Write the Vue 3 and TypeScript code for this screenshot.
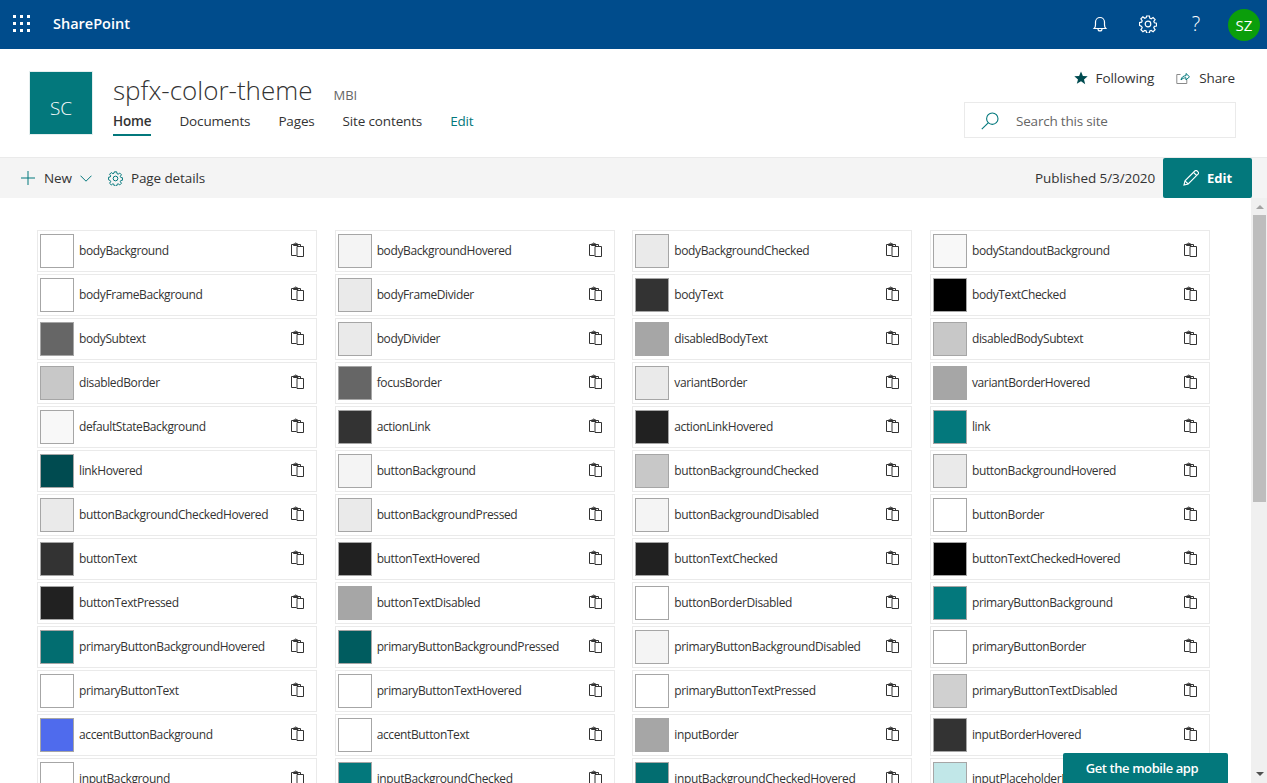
<template>
  <div class="page">
    <header class="suite">
      <div class="waffle">
        <i v-for="n in 9" :key="n"></i>
      </div>
      <span class="brand">SharePoint</span>
      <div class="suite-right">
        <svg class="suite-icon" viewBox="0 0 16 18" width="16" height="18" fill="none" stroke="#fff" stroke-width="1.2">
          <path d="M2.2 13.5c1-1 1.3-2 1.3-3.8V7a4.5 4.5 0 0 1 9 0v2.7c0 1.8.3 2.8 1.3 3.8z" />
          <path d="M6 14c0 2.6 4 2.6 4 0" />
        </svg>
        <svg class="suite-icon" viewBox="0 0 18 18" width="18" height="18" fill="none" stroke="#fff" stroke-width="1.2">
          <circle cx="9" cy="9" r="2.8" />
          <path d="M7.6 1h2.8l.4 2.2 1.4.6 1.9-1.3 2 2-1.3 1.9.6 1.4 2.1.4v2.8l-2.1.4-.6 1.4 1.3 1.9-2 2-1.9-1.3-1.4.6-.4 2.1H7.6l-.4-2.1-1.4-.6-1.9 1.3-2-2 1.3-1.9-.6-1.4L.5 10.4V7.6l2.1-.4.6-1.4-1.3-1.9 2-2 1.9 1.3 1.4-.6z" />
        </svg>
        <span class="help">?</span>
        <span class="avatar">SZ</span>
      </div>
    </header>

    <section class="site-head">
      <div class="logo">SC</div>
      <div class="site-info">
        <div class="title-row">
          <h1>spfx-color-theme</h1>
          <span class="mbi">MBI</span>
        </div>
        <nav class="site-nav">
          <a class="active">Home</a>
          <a>Documents</a>
          <a>Pages</a>
          <a>Site contents</a>
          <a class="nav-edit">Edit</a>
        </nav>
      </div>
      <div class="site-actions">
        <div class="follow-row">
          <span class="action">
            <svg viewBox="0 0 14 14" width="14" height="14"><path fill="#004b50" d="M7 .4l1.9 4.5 4.8.4-3.7 3.1 1.2 4.8L7 10.2l-4.2 2.5L4 8.4.3 5.3l4.800-.4z" /></svg>
            Following
          </span>
          <span class="action share">
            <svg viewBox="0 0 14 14" width="14" height="14" fill="none" stroke="#8a8a8a" stroke-width="1">
              <path d="M4.5 3.5H.8v9h10V9" />
              <path d="M5 9c.4-2.8 2.400-4.300 5-4.300V2.500l3.500 3.300L10 9V6.800C8 6.800 6.300 7.500 5 9z" stroke="#03787c" />
            </svg>
            Share
          </span>
        </div>
        <div class="search">
          <svg viewBox="0 0 18 18" width="18" height="18" fill="none" stroke="#03787c" stroke-width="1.1">
            <circle cx="11.3" cy="6.7" r="5.7" />
            <path d="M7.2 10.8L.8 17.2" />
          </svg>
          <span>Search this site</span>
        </div>
      </div>
    </section>

    <div class="command-bar">
      <svg viewBox="0 0 14 14" width="14" height="14" stroke="#03787c" stroke-width="1" fill="none"><path d="M7 0v14M0 7h14" /></svg>
      <span class="cmd-new">New</span>
      <svg class="chev" viewBox="0 0 12 7" width="12" height="7" fill="none" stroke="#03787c" stroke-width="1"><path d="M.5.7L6 6.2 11.500.7" /></svg>
      <svg class="cmd-gear" viewBox="0 0 18 18" width="15" height="15" fill="none" stroke="#03787c" stroke-width="1.2">
        <circle cx="9" cy="9" r="2.8" />
        <path d="M7.6 1h2.8l.4 2.2 1.4.6 1.9-1.3 2 2-1.3 1.9.6 1.4 2.1.4v2.8l-2.1.4-.6 1.4 1.3 1.9-2 2-1.9-1.3-1.4.6-.4 2.1H7.6l-.4-2.1-1.4-.6-1.9 1.3-2-2 1.3-1.9-.6-1.4L.5 10.4V7.6l2.1-.4.6-1.4-1.3-1.9 2-2 1.9 1.3 1.4-.6z" />
      </svg>
      <span>Page details</span>
      <span class="published">Published 5/3/2020</span>
      <button class="edit-btn">
        <svg viewBox="0 0 16 16" width="16" height="16" fill="none" stroke="#fff" stroke-width="1.1">
          <path d="M1 15l1-4.2L11.800 1a1.700 1.700 0 0 1 2.400 0l.8.8a1.700 1.700 0 0 1 0 2.400L5.200 14z" />
          <path d="M2 10.800L5.200 14M10.500 2.300l3.200 3.200" />
        </svg>
        Edit
      </button>
    </div>

    <div class="scroll-area">
      <main class="content">
        <div class="grid">
          <div v-for="item in slots" :key="item.name" class="card">
            <span class="swatch" :style="{ background: item.color }"></span>
            <span class="name">{{ item.name }}</span>
            <svg class="copy" viewBox="0 0 13 15" width="13" height="15" fill="none" stroke="#333333" stroke-width="1">
              <path d="M5.5 13.5H.5V2.500h9V4.500" />
              <path d="M2.500 3.500V2H4C4 .5 5.500 .5 5.500 2H7v1.500z" />
              <path d="M6 4.500h6.500v10H6z" />
            </svg>
          </div>
        </div>
      </main>
      <div class="scrollbar">
        <div class="arrow up"></div>
        <div class="thumb"></div>
        <div class="arrow down"></div>
      </div>
      <button class="mobile">Get the mobile app</button>
    </div>
  </div>
</template>

<script setup lang="ts">
interface Slot {
  name: string
  color: string
}

const teal = '#03787c'

const slots: Slot[] = [
  { name: 'bodyBackground', color: '#ffffff' },
  { name: 'bodyBackgroundHovered', color: '#f4f4f4' },
  { name: 'bodyBackgroundChecked', color: '#eaeaea' },
  { name: 'bodyStandoutBackground', color: '#f8f8f8' },
  { name: 'bodyFrameBackground', color: '#ffffff' },
  { name: 'bodyFrameDivider', color: '#eaeaea' },
  { name: 'bodyText', color: '#333333' },
  { name: 'bodyTextChecked', color: '#000000' },
  { name: 'bodySubtext', color: '#666666' },
  { name: 'bodyDivider', color: '#eaeaea' },
  { name: 'disabledBodyText', color: '#a6a6a6' },
  { name: 'disabledBodySubtext', color: '#c8c8c8' },
  { name: 'disabledBorder', color: '#c8c8c8' },
  { name: 'focusBorder', color: '#666666' },
  { name: 'variantBorder', color: '#eaeaea' },
  { name: 'variantBorderHovered', color: '#a6a6a6' },
  { name: 'defaultStateBackground', color: '#f8f8f8' },
  { name: 'actionLink', color: '#333333' },
  { name: 'actionLinkHovered', color: '#212121' },
  { name: 'link', color: teal },
  { name: 'linkHovered', color: '#004b50' },
  { name: 'buttonBackground', color: '#f4f4f4' },
  { name: 'buttonBackgroundChecked', color: '#c8c8c8' },
  { name: 'buttonBackgroundHovered', color: '#eaeaea' },
  { name: 'buttonBackgroundCheckedHovered', color: '#eaeaea' },
  { name: 'buttonBackgroundPressed', color: '#eaeaea' },
  { name: 'buttonBackgroundDisabled', color: '#f4f4f4' },
  { name: 'buttonBorder', color: '#ffffff' },
  { name: 'buttonText', color: '#333333' },
  { name: 'buttonTextHovered', color: '#212121' },
  { name: 'buttonTextChecked', color: '#212121' },
  { name: 'buttonTextCheckedHovered', color: '#000000' },
  { name: 'buttonTextPressed', color: '#212121' },
  { name: 'buttonTextDisabled', color: '#a6a6a6' },
  { name: 'buttonBorderDisabled', color: '#ffffff' },
  { name: 'primaryButtonBackground', color: teal },
  { name: 'primaryButtonBackgroundHovered', color: '#026d70' },
  { name: 'primaryButtonBackgroundPressed', color: '#005c5f' },
  { name: 'primaryButtonBackgroundDisabled', color: '#f4f4f4' },
  { name: 'primaryButtonBorder', color: '#ffffff' },
  { name: 'primaryButtonText', color: '#ffffff' },
  { name: 'primaryButtonTextHovered', color: '#ffffff' },
  { name: 'primaryButtonTextPressed', color: '#ffffff' },
  { name: 'primaryButtonTextDisabled', color: '#d0d0d0' },
  { name: 'accentButtonBackground', color: '#4f6bed' },
  { name: 'accentButtonText', color: '#ffffff' },
  { name: 'inputBorder', color: '#a6a6a6' },
  { name: 'inputBorderHovered', color: '#333333' },
  { name: 'inputBackground', color: '#ffffff' },
  { name: 'inputBackgroundChecked', color: teal },
  { name: 'inputBackgroundCheckedHovered', color: '#026d70' },
  { name: 'inputPlaceholderBackgroundChecked', color: '#c1e7e8' },
]
</script>

<style>
html, body { margin: 0; height: 100%; overflow: hidden; background: #fff; }
</style>

<style scoped>
.page {
  display: flex; flex-direction: column;
  height: 783px; overflow: hidden;
  font-family: 'Open Sans', 'Noto Sans', sans-serif;
  color: #333333;
  font-size: 13px;
}
.suite {
  display: flex; align-items: center;
  height: 49px; flex: none;
  background: #004c8c; color: #fff;
  padding-left: 13px;
}
.waffle {
  display: grid; grid-template-columns: repeat(3, 3px); gap: 4px;
  width: 17px; margin-bottom: 2px;
}
.waffle i { width: 3px; height: 3px; background: #fff; }
.brand { margin-left: 23px; margin-bottom: 2px; font-size: 14.5px; font-weight: 600; }
.suite-right { margin-left: auto; display: flex; align-items: center; padding-right: 7px; }
.suite-icon { display: block; margin-bottom: 2px; }
.suite-right .suite-icon:first-child { margin-right: 31px; }
.suite-right .suite-icon:nth-child(2) { margin-right: 31px; }
.help { font-size: 20px; font-weight: 300; width: 16px; text-align: center; margin-bottom: 2px; }
.avatar {
  display: flex; align-items: center; justify-content: center;
  width: 32px; height: 32px; margin-left: 24px;
  background: #0b9e0b; border-radius: 50%;
  font-size: 15px;
}

.site-head {
  display: flex; flex: none;
  height: 108px; box-sizing: border-box;
  padding: 22px 31px 0 29px;
}
.logo {
  display: flex; justify-content: center; align-items: center;
  width: 64px; height: 64px; box-sizing: border-box;
  padding-top: 10px;
  background: #03787c; border: 1px solid #e3eeee;
  color: #fff; font-size: 19px; font-weight: 300;
}
.site-info { margin-left: 20px; padding-top: 1px; }
.title-row { display: flex; align-items: baseline; height: 36px; }
h1 { margin: 0; font-size: 26px; font-weight: 300; line-height: 36px; color: #333333; }
.mbi { margin-left: 21px; font-size: 13px; color: #666666; }
.site-nav { display: flex; gap: 28px; }
.site-nav a {
  display: block; height: 28px; line-height: 26px;
  box-sizing: border-box; font-size: 13.5px; letter-spacing: -0.15px;
}
.site-nav .active { font-weight: 600; border-bottom: 2px solid #03787c; }
.site-nav .nav-edit { color: #03787c; }
.site-actions { margin-left: auto; margin-top: -1px; display: flex; flex-direction: column; align-items: flex-end; gap: 16px; }
.follow-row {
  display: flex; gap: 22px; height: 16px; align-items: center;
  padding-right: 1px;
  font-size: 13.5px; letter-spacing: -0.1px;
}
.action { display: flex; align-items: center; gap: 8px; }
.share { gap: 9px; }
.search {
  display: flex; align-items: center; gap: 17px;
  width: 272px; height: 36px; box-sizing: border-box;
  padding: 1px 0 0 16px;
  border: 1px solid #eaeaea;
  color: #666666; font-size: 13.5px; letter-spacing: -0.2px;
}

.command-bar {
  display: flex; align-items: center; flex: none;
  height: 41px; box-sizing: border-box;
  padding: 0 15px 0 21px;
  background: #f4f4f4; border-top: 1px solid #eaeaea;
  font-size: 13.5px; letter-spacing: -0.1px;
}
.cmd-new { margin-left: 9px; }
.chev { margin-left: 8px; }
.cmd-gear { margin: 0 8px 0 16px; }
.published { margin-left: auto; margin-right: 8px; }
.edit-btn {
  display: flex; align-items: center; justify-content: center; gap: 8px;
  width: 89px; height: 40px; padding: 0;
  background: #03787c; color: #fff;
  border: 0; border-radius: 2px;
  font-family: inherit; font-size: 13px; font-weight: 700;
}

.scroll-area { position: relative; display: flex; flex: 1; min-height: 0; overflow: hidden; }
.content { flex: 1; min-width: 0; padding: 32px 0 0 37px; }
.grid { display: grid; grid-template-columns: repeat(4, 280px); column-gap: 17.67px; row-gap: 2px; }
.card {
  display: flex; align-items: center;
  height: 42px; box-sizing: border-box;
  padding: 0 12px 0 2px;
  border: 1px solid #eaeaea;
}
.swatch {
  flex: none; width: 34px; height: 34px; box-sizing: border-box;
  border: 1px solid #a6a6a6;
}
.name { margin: 0 0 2px 5px; font-size: 12px; letter-spacing: -0.38px; white-space: nowrap; }
.copy { margin: 0 0 3px auto; flex: none; }

.scrollbar { flex: none; width: 16px; display: flex; flex-direction: column; background: #f0f0f0; }
.arrow { height: 17px; flex: none; position: relative; }
.arrow::after {
  content: ''; position: absolute; left: 5px; top: 7px;
  border-left: 4px solid transparent; border-right: 4px solid transparent;
}
.arrow.up::after { border-bottom: 4px solid #a3a3a3; }
.arrow.down { margin-top: auto; }
.arrow.down::after { top: 6px; border-top: 4px solid #505050; }
.thumb { height: 287px; margin: 0 1px 0 2px; background: #bdbdbd; }
.mobile {
  position: absolute; right: 39px; bottom: 0;
  width: 165px; height: 30px; padding: 0 7px 0 0;
  background: #03787c; color: #fff;
  border: 0; border-radius: 2px 2px 0 0;
  font-family: inherit; font-size: 13px; font-weight: 600; letter-spacing: -0.42px;
}
</style>
